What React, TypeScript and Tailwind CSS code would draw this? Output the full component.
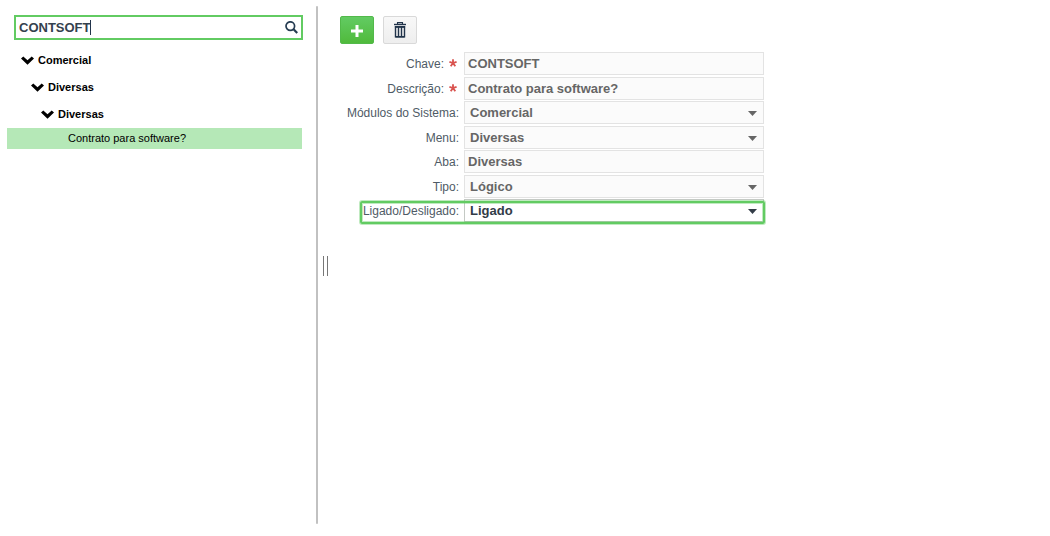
import clsx from 'clsx';
import { FC } from 'react';

type TreeItem = {
  label: string;
  className: string;
};

type Field = {
  label: string;
  value: string;
  required?: boolean;
  select?: boolean;
  active?: boolean;
  className: string;
};

const treeItems: TreeItem[] = [
  { label: 'Comercial', className: 'pl-[21px]' },
  { label: 'Diversas', className: 'pl-[31px]' },
  { label: 'Diversas', className: 'pl-[41px]' },
];

const fields: Field[] = [
  { label: 'Chave:', value: 'CONTSOFT', required: true, className: 'mb-0.5' },
  {
    label: 'Descrição:',
    value: 'Contrato para software?',
    required: true,
    className: 'mb-px',
  },
  {
    label: 'Módulos do Sistema:',
    value: 'Comercial',
    select: true,
    className: 'mb-0.5',
  },
  { label: 'Menu:', value: 'Diversas', select: true, className: 'mb-px' },
  { label: 'Aba:', value: 'Diversas', className: 'mb-0.5' },
  { label: 'Tipo:', value: 'Lógico', select: true, className: 'mb-px' },
  {
    label: 'Ligado/Desligado:',
    value: 'Ligado',
    select: true,
    active: true,
    className: '',
  },
];

const ChevronIcon: FC = () => (
  <svg width="13" height="9" viewBox="0 0 13 9" className="shrink-0">
    <path d="M0 2.6 2.3.4 6.5 4.2 10.7.4 13 2.6 6.5 8.8z" fill="#000" />
  </svg>
);

const SearchIcon: FC = () => (
  <svg width="13" height="13" viewBox="0 0 13 13" fill="none" stroke="#263c52">
    <circle cx="5.3" cy="5.1" r="4.3" strokeWidth="1.7" />
    <path d="m8.3 8.1 3.9 4" strokeWidth="2.2" />
  </svg>
);

const TrashIcon: FC = () => (
  <svg width="12" height="16" viewBox="0 0 12 16" fill="none" stroke="#22344b">
    <path d="M3.5 2V.6h5V2" strokeWidth="1.1" />
    <path d="M0 2.5h12" strokeWidth="1.4" />
    <path d="M1.5 4.7v10.1h9V4.7z" strokeWidth="1.4" />
    <path d="M4.5 5v9M7.5 5v9" strokeWidth="1.4" />
    <path d="M.9 5h10.2M1.5 14.7h9" strokeWidth="1.6" />
  </svg>
);

const RequiredMark: FC = () => (
  <svg
    width="8"
    height="8"
    viewBox="0 0 8 8"
    fill="none"
    stroke="#d9534f"
    strokeWidth="1.8"
    className="mr-0.5 mb-0.5 ml-[5px]"
  >
    <path d="M4 4V.2M4 4 .4 2.8M4 4l3.6-1.2M4 4 1.7 7.3M4 4l2.3 3.3" />
  </svg>
);

const Sidebar: FC = () => (
  <aside className="w-[316px] shrink-0 pt-[15px]">
    <div className="ml-[14px] flex h-[25px] w-[289px] items-center justify-between border-2 border-[#62cb62] px-[3px]">
      <div className="flex items-center">
        <span className="text-[13px] leading-[18px] font-bold text-[#34414e]">
          CONTSOFT
        </span>
        <span className="-ml-px h-[15px] w-px bg-[#22344b]" />
      </div>
      <SearchIcon />
    </div>
    <div className="pt-[7px] text-[11px] text-black">
      {treeItems.map(({ label, className }, index) => (
        <div
          key={index}
          className={clsx(
            'flex h-[27px] items-center gap-1 font-bold',
            className
          )}
        >
          <ChevronIcon />
          {label}
        </div>
      ))}
      <div className="ml-[7px] flex h-[21px] w-[295px] items-center bg-[#b5e8b7] pl-[61px]">
        Contrato para software?
      </div>
    </div>
  </aside>
);

const Splitter: FC = () => (
  <div className="flex w-[24px] shrink-0 pt-1.5">
    <div className="h-[518px] w-0.5 rounded-full bg-[#c1c1c1]" />
    <div className="mt-[250px] ml-[5px] h-5 w-[5px] border-x border-[#777]" />
  </div>
);

const FieldRow: FC<Field> = ({
  label,
  value,
  required,
  select,
  active,
  className,
}) => (
  <div className={clsx('flex h-[23px]', className)}>
    <div className="flex w-[119px] items-center justify-end text-[12px] whitespace-nowrap text-[#4f5b66]">
      {label}
      {required && <RequiredMark />}
    </div>
    <div
      className={clsx(
        'ml-[5px] flex w-[300px] items-center justify-between border pr-1.5 text-[13px] font-bold',
        select ? 'pl-[5px]' : 'pl-[3px]',
        active
          ? 'border-[#c4c9c4] bg-white text-[#323c47]'
          : 'border-[#e3e3e3] bg-[#fbfbfb] text-[#666]'
      )}
    >
      {value}
      {select && (
        <svg
          width="9"
          height="5"
          viewBox="0 0 9 5"
          fill="currentColor"
          className="mt-px"
        >
          <path d="M0 0h9L4.5 5z" />
        </svg>
      )}
    </div>
  </div>
);

export default function App() {
  return (
    <div className="flex h-[536px] w-[1050px] overflow-hidden bg-white font-['Liberation_Sans',Arial,sans-serif]">
      <Sidebar />
      <Splitter />
      <main className="pt-4">
        <div className="flex gap-[9px]">
          <button className="flex h-7 w-[34px] items-center justify-center rounded-xs border border-[#52b94a] bg-linear-to-b from-[#62cb62] to-[#50ba3b]">
            <svg
              width="12"
              height="12"
              viewBox="0 0 12 12"
              fill="#fff"
              className="mt-px"
            >
              <path d="M4.5 0h3v4.5H12v3H7.5V12h-3V7.5H0v-3h4.5z" />
            </svg>
          </button>
          <button className="flex h-7 w-[34px] items-center justify-center rounded-xs border border-[#d9d9d9] bg-linear-to-b from-[#f8f8f8] to-[#eee]">
            <TrashIcon />
          </button>
        </div>
        <div className="relative pt-2">
          {fields.map((field, index) => (
            <FieldRow key={index} {...field} />
          ))}
          {/* highlight around the last row */}
          <div className="absolute top-[157px] left-5 h-[23px] w-[405px] rounded-xs border-2 border-[#62cb62] shadow-[0_0_0_1px_#62cb6266,inset_0_0_0_1px_#62cb6266]" />
        </div>
      </main>
    </div>
  );
}
